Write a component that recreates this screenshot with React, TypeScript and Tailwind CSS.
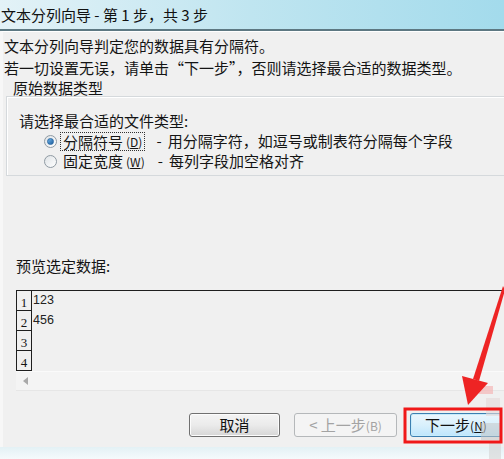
import React from 'react';

const Radio: React.FC<{ checked?: boolean }> = ({ checked }) => (
  <span className="w-[13px] h-[13px] rounded-full border border-[#8f9aa3] bg-gradient-to-br from-[#dfe3e6] to-[#ffffff] flex items-center justify-center shrink-0">
    {checked && (
      <span className="w-[7px] h-[7px] rounded-full bg-gradient-to-br from-[#6fb4e8] to-[#1f5f9e] border border-[#2c6aa5]"></span>
    )}
  </span>
);

const rows = [
  { n: '1', v: '123' },
  { n: '2', v: '456' },
  { n: '3', v: '' },
  { n: '4', v: '' },
];

export default function App() {
  return (
    <div className="relative w-[504px] h-[459px] overflow-hidden bg-[#f0f0f0] text-[#141414] font-['Noto_Sans_CJK_SC','Liberation_Sans',sans-serif] text-[15px] flex flex-col">
      {/* title bar */}
      <div className="h-[31px] shrink-0 flex items-center bg-gradient-to-r from-[#e3f2f7] via-[#bfe5f0] to-[#a3dbec] border-b-2 border-[#5d7882]">
        <span className="pl-[1px] leading-[31px] text-[15px] text-[#111]">文本分列向导 - 第 1 步，共 3 步</span>
      </div>

      {/* body */}
      <div className="flex-1 flex flex-col border-t border-white border-l-[3px] border-l-[#f7f7f7] px-[1px]">
        <div className="mt-[3px] h-[22px] leading-[22px]">文本分列向导判定您的数据具有分隔符。</div>
        <div className="h-[22px] leading-[22px]">若一切设置无误，请单击“下一步”，否则请选择最合适的数据类型。</div>
        <div className="h-[17px] leading-[17px] pl-[9px]">原始数据类型</div>

        {/* group box */}
        <div className="ml-[2px] -mr-[20px] h-[80px] border border-[#d5d9dc] shadow-[inset_1px_1px_0_#ffffff] pl-[12px] pt-[14px]">
          <div className="h-[20px] leading-[20px]">请选择最合适的文件类型:</div>
          <div className="h-[20px] flex items-center">
            <span className="ml-[25px]"><Radio checked /></span>
            <span className="ml-[3px] h-[19px] px-[2px] border border-dotted border-[#333] flex items-center leading-[17px]">
              分隔符号<span className="ml-[3px] text-[12px]">(<u>D</u>)</span>
            </span>
            <span className="ml-[11px]">-</span>
            <span className="ml-[6px]">用分隔字符，如逗号或制表符分隔每个字段</span>
          </div>
          <div className="h-[20px] flex items-center">
            <span className="ml-[25px]"><Radio /></span>
            <span className="ml-[6px] leading-[17px]">
              固定宽度<span className="ml-[3px] text-[12px]">(<u>W</u>)</span>
            </span>
            <span className="ml-[13px]">-</span>
            <span className="ml-[6px]">每列字段加空格对齐</span>
          </div>
        </div>

        <div className="mt-[80px] h-[20px] leading-[20px] pl-[12px]">预览选定数据:</div>

        {/* preview */}
        <div className="mt-[14px] ml-[12px] -mr-[20px] h-[81px] overflow-hidden border-t border-l border-[#1e1e1e]">
          {rows.map((r) => (
            <div key={r.n} className="flex h-[20px]">
              <div className="w-[15px] shrink-0 border-r border-b border-[#1e1e1e] flex items-end justify-center font-['Liberation_Serif',serif] text-[13px] leading-[15px]">
                {r.n}
              </div>
              <div className="pl-[1px] pt-[1px] font-['Liberation_Sans',sans-serif] text-[12.5px] leading-[16px] text-[#222]">{r.v}</div>
            </div>
          ))}
        </div>
        {/* horizontal scrollbar */}
        <div className="ml-[12px] -mr-[20px] h-[20px] bg-[#f4f4f4] border-t border-[#fafafa] border-b border-b-[#e6e6e6] flex items-center">
          <svg width="6" height="8" viewBox="0 0 6 8" className="ml-[7px]">
            <path d="M5 0 L0 4 L5 8 Z" fill="#a9a9a9" />
          </svg>
        </div>

        {/* buttons */}
        <div className="mt-[22px] flex items-center text-[15px]">
          <button className="ml-[185px] w-[91px] h-[24px] rounded-[3px] border border-[#707070] bg-gradient-to-b from-[#f4f4f4] via-[#ebebeb] to-[#d6d6d6] leading-[22px] text-[#111] shadow-[inset_0_0_0_1px_#fcfcfc]">
            取消
          </button>
          <button className="ml-[14px] w-[103px] h-[24px] rounded-[3px] border border-[#b5b8ba] bg-[#f4f4f4] leading-[22px] text-[#a3a3a3]">
            &lt; 上一步<span className="text-[12px]">(B)</span>
          </button>
          <button className="ml-[13px] w-[92px] h-[24px] rounded-[3px] border border-[#3c7fb1] bg-gradient-to-b from-[#eaf6fd] via-[#d9f0fc] to-[#bee6fd] leading-[22px] text-[#111] shadow-[inset_0_0_0_1px_#c8ecfb]">
            下一步<span className="text-[12px]">(<u>N</u>)</span>
          </button>
        </div>
      </div>

      {/* bottom frame */}
      <div className="h-[12px] shrink-0 bg-gradient-to-b from-[#e3f1f5] to-[#f5fafc]"></div>

      {/* annotation overlay */}
      <svg className="absolute inset-0 pointer-events-none" width="504" height="459" viewBox="0 0 504 459">
        <rect x="479" y="386" width="14" height="8" fill="#f4b6b6" opacity="0.7" />
        <rect x="486" y="398" width="14" height="18" fill="#e4d9d9" opacity="0.6" />
        <rect x="481" y="423" width="21" height="17" fill="#c7c7c7" opacity="0.55" />
        <rect x="489" y="442" width="12" height="17" fill="#d3d3d3" opacity="0.6" />
        <rect x="405" y="409" width="96" height="33" fill="none" stroke="#f01818" strokeWidth="3" />
        <polygon points="503,286 505,290 479,381 473,379" fill="#ee2424" />
        <polygon points="468,405 462,376 488,383" fill="#ee2424" />
      </svg>
    </div>
  );
}
